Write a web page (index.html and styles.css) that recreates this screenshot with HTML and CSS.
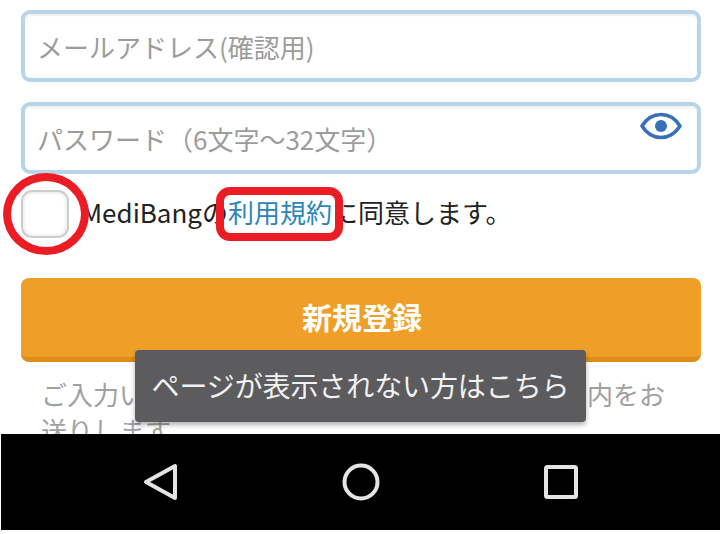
FILE: index.html
```html
<!DOCTYPE html>
<html lang="ja">
<head>
<meta charset="utf-8">
<title>新規登録</title>
<link rel="stylesheet" href="styles.css">
</head>
<body>
<div class="screen">
  <main class="content">
    <div class="field"><span class="placeholder">メールアドレス(確認用)</span></div>
    <div class="field field-password">
      <span class="placeholder">パスワード（6文字～32文字）</span>
      <svg class="eye" width="42" height="28" viewBox="0 0 42 28"><path d="M2 14C7 6 13.500 2.500 21 2.500S35 6 40 14C35 22 28.500 25.500 21 25.500S7 22 2 14Z" fill="none" stroke="#3670b8" stroke-width="3.500" stroke-linejoin="round"/><circle cx="21" cy="14" r="6" fill="#3670b8"/></svg>
    </div>
    <div class="agree">
      <span class="checkbox"></span>
      <p class="agree-text">MediBangの<a class="terms">利用規約</a>に同意します。</p>
    </div>
    <button class="submit">新規登録</button>
    <p class="note">ご入力いただいたメールアドレスに登録のご案内をお送りします。</p>
    <div class="toast">ページが表示されない方はこちら</div>
    <span class="mark mark-circle"></span>
    <span class="mark mark-rect"></span>
  </main>
  <nav class="navbar">
    <svg width="36" height="38" viewBox="0 0 36 38"><path d="M32 3V35L3 19Z" fill="none" stroke="#e4e4e4" stroke-width="4" stroke-linejoin="round"/></svg>
    <svg width="38" height="38" viewBox="0 0 38 38"><circle cx="19" cy="19" r="16.500" fill="none" stroke="#e4e4e4" stroke-width="4"/></svg>
    <svg width="34" height="34" viewBox="0 0 34 34"><rect x="2" y="2" width="30" height="30" rx="1.500" fill="none" stroke="#e4e4e4" stroke-width="4"/></svg>
  </nav>
</div>
</body>
</html>
```
FILE: styles.css
```css
* { box-sizing: border-box; }
html, body { margin: 0; padding: 0; background: #fff; }
body { font-family: "Noto Sans CJK JP", "Noto Sans", sans-serif; }
.screen { width: 722px; height: 534px; display: flex; flex-direction: column; }
.content { position: relative; height: 434px; overflow: hidden; padding: 10px 21px 0; display: flex; flex-direction: column; }
.field { height: 72px; border: 4px solid #b8d4e8; border-radius: 9px; box-shadow: inset 0 2px 2px rgba(0,0,0,.06); padding: 2px 12px 0; display: flex; align-items: center; flex-shrink: 0; }
.field + .field { margin-top: 20px; }
.placeholder { font-size: 26px; color: #9c9c9c; line-height: 1; }
.field-password { position: relative; }
.eye { position: absolute; right: 15px; top: 6px; }
.agree { display: flex; align-items: center; height: 48px; margin-top: 16px; flex-shrink: 0; }
.checkbox { width: 48px; height: 48px; border: 2px solid #cdcdcd; border-radius: 11px; box-shadow: inset 0 0 4px rgba(0,0,0,.14); flex-shrink: 0; }
.agree-text { margin: 0 0 5px 12px; font-size: 26px; color: #222; line-height: 1; white-space: nowrap; }
.terms { color: #2b86b8; }
.submit { height: 84px; margin-top: 40px; flex-shrink: 0; border: 0; border-bottom: 5px solid #dd8d1a; border-radius: 8px; background: #ef9f28; color: #fff; font: 700 30px "Noto Sans CJK JP", sans-serif; padding: 0 0 4px 2px; }
.note { margin: 14px 0 0; padding: 0 22px 0 20px; font-size: 26px; line-height: 36px; color: #a0a0a0; }
.toast { position: absolute; left: 135px; top: 350px; width: 451px; height: 72px; background: #5c5c5e; border-radius: 4px; box-shadow: 0 3px 5px rgba(0,0,0,.3); color: #f2f2f2; font-size: 28px; display: flex; align-items: center; justify-content: center; letter-spacing: -.1px; padding-bottom: 2px; }
.mark { position: absolute; border: 8px solid #ec1c24; }
.mark-circle { left: 3px; top: 173px; width: 86px; height: 82px; border-radius: 50%; }
.mark-rect { left: 216px; top: 187px; width: 127px; height: 54px; border-radius: 14px; }
.navbar { height: 96px; margin: 0 2px 0 1px; background: #000; display: flex; align-items: center; flex-shrink: 0; padding-left: 142px; gap: 0; }
.navbar svg:nth-child(2) { margin-left: 163px; }
.navbar svg:nth-child(3) { margin-left: 164px; }
```
